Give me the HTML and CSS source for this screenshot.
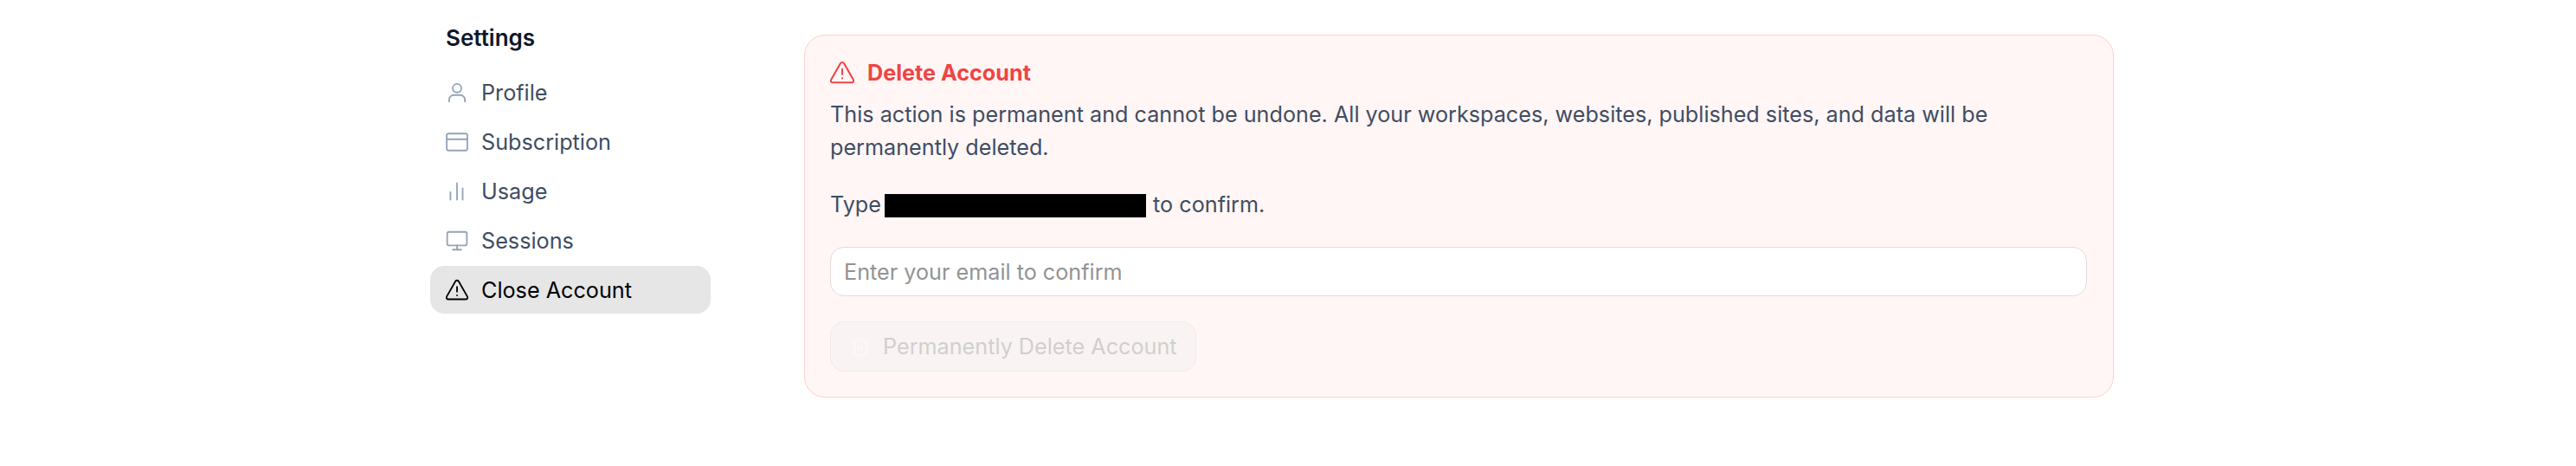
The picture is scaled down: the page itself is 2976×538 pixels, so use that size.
FILE: index.html
```html
<!DOCTYPE html>
<html lang="en">
<head>
    <meta charset="UTF-8">
    <title>Settings - Close Account</title>
    <link rel="stylesheet" href="styles.css">
</head>
<body>
    <div class="page">
        <aside class="sidebar">
            <h2 class="sidebar-title">Settings</h2>
            <nav class="nav">
                <a class="nav-item">
                    <svg class="nav-icon" viewBox="0 0 24 24"><circle cx="12" cy="7.2" r="4.6"/><path d="M3.6 21.5v-2a5 5 0 0 1 5-5h6.800a5 5 0 0 1 5 5v2"/></svg>
                    Profile
                </a>
                <a class="nav-item">
                    <svg class="nav-icon" viewBox="0 0 24 24"><rect x="1" y="3" width="22" height="18" rx="2"/><path d="M1 9h22"/></svg>
                    Subscription
                </a>
                <a class="nav-item">
                    <svg class="nav-icon" viewBox="0 0 24 24"><path d="M5 20.800v-8M12 20.800V3.200M18 20.800v-12"/></svg>
                    Usage
                </a>
                <a class="nav-item">
                    <svg class="nav-icon" viewBox="0 0 24 24"><rect x="1.500" y="2.500" width="21" height="14.500" rx="2"/><path d="M12 17v4.500M7.500 21.500h9"/></svg>
                    Sessions
                </a>
                <a class="nav-item active">
                    <svg class="nav-icon" viewBox="0 0 24 24"><path d="M10.300 2.600 1 18.800a1.900 1.900 0 0 0 1.600 2.900h18.800a1.900 1.900 0 0 0 1.600-2.900L13.700 2.600a2 2 0 0 0-3.400 0z"/><path d="M12 8.500v5M12 17.500h.01"/></svg>
                    Close Account
                </a>
            </nav>
        </aside>
        <main class="danger-card">
            <h3 class="danger-title">
                <svg class="danger-icon" viewBox="0 0 24 24"><path d="M10.300 2.600 1 18.800a1.900 1.900 0 0 0 1.600 2.900h18.800a1.900 1.900 0 0 0 1.600-2.900L13.700 2.600a2 2 0 0 0-3.400 0z"/><path d="M12 8.500v5M12 17.500h.01"/></svg>
                Delete Account
            </h3>
            <p class="danger-text">This action is permanent and cannot be undone. All your workspaces, websites, published sites, and data will be permanently deleted.</p>
            <p class="confirm-text">Type <span class="redacted"></span> to confirm.</p>
            <input class="confirm-input" type="text" placeholder="Enter your email to confirm">
            <button class="delete-button" disabled>
                <svg class="delete-icon" viewBox="0 0 24 24"><path d="M3 6h18M8 6V4a2 2 0 0 1 2-2h4a2 2 0 0 1 2 2v2M19 6v14a2 2 0 0 1-2 2H7a2 2 0 0 1-2-2V6M10 11v6M14 11v6"/></svg>
                Permanently Delete Account
            </button>
        </main>
    </div>
</body>
</html>
```

FILE: styles.css
```css
* {
    margin: 0;
    padding: 0;
    box-sizing: border-box;
}

html, body {
    height: 100%;
    background: #fff;
    font-family: Inter, "Liberation Sans", sans-serif;
}

.page {
    display: flex;
    align-items: flex-start;
    gap: 108px;
    padding: 32px 0 0 497px;
}

.sidebar {
    width: 324px;
    flex-shrink: 0;
}

.sidebar-title {
    font-size: 26px;
    line-height: 24px;
    font-weight: 600;
    color: #0f172a;
    padding-left: 18px;
    margin-bottom: 23px;
}

.nav {
    display: flex;
    flex-direction: column;
    gap: 2px;
}

.nav-item {
    display: flex;
    align-items: center;
    gap: 15px;
    height: 55px;
    padding: 0 18px;
    border-radius: 16px;
    font-size: 25.2px;
    color: #3f4d63;
}

.nav-icon {
    width: 26px;
    height: 26px;
    fill: none;
    stroke: #94a3b8;
    stroke-width: 1.7;
    stroke-linecap: round;
    stroke-linejoin: round;
    flex-shrink: 0;
}

.nav-item.active {
    background: #e6e6e6;
    color: #000;
}

.nav-item.active .nav-icon {
    stroke: #000;
}

.danger-card {
    width: 1513px;
    height: 419px;
    margin-top: 8px;
    padding: 28px 29px;
    background: #fff6f5;
    border: 1.5px solid #fed2d2;
    border-radius: 24px;
}

.danger-title {
    display: flex;
    align-items: center;
    gap: 15px;
    font-size: 25.2px;
    line-height: 30px;
    font-weight: 700;
    color: #ef4444;
    margin-bottom: 14px;
}

.danger-icon {
    width: 28px;
    height: 28px;
    fill: none;
    stroke: #ef4444;
    stroke-width: 1.8;
    stroke-linecap: round;
    stroke-linejoin: round;
}

.danger-text {
    font-size: 25.2px;
    line-height: 38px;
    color: #3f4d63;
    margin-bottom: 28px;
}

.confirm-text {
    font-size: 25.2px;
    line-height: 38px;
    color: #3f4d63;
    margin-bottom: 30px;
}

.redacted {
    display: inline-block;
    width: 302px;
    height: 27px;
    margin-left: -3px;
    margin-right: 1px;
    background: #000;
    vertical-align: -6px;
}

.confirm-input {
    display: block;
    width: 1452px;
    height: 57px;
    padding: 0 15px;
    background: #fff;
    border: 1.5px solid #e3dcdc;
    border-radius: 16px;
    font-family: inherit;
    font-size: 25.2px;
    color: #475569;
    margin-bottom: 29px;
}

.confirm-input::placeholder {
    color: #939393;
    opacity: 1;
}

.delete-button {
    display: flex;
    align-items: center;
    gap: 14px;
    width: 423px;
    height: 58px;
    padding: 0 0 0 22px;
    background: #f9f4f3;
    border: 1.5px solid #f2eaea;
    border-radius: 16px;
    font-family: inherit;
    font-size: 25.2px;
    font-weight: 400;
    color: #d2cfce;
    white-space: nowrap;
}

.delete-icon {
    width: 24px;
    height: 24px;
    fill: none;
    stroke: #fcf8f7;
    stroke-width: 1.7;
    stroke-linecap: round;
    stroke-linejoin: round;
    flex-shrink: 0;
}
```
